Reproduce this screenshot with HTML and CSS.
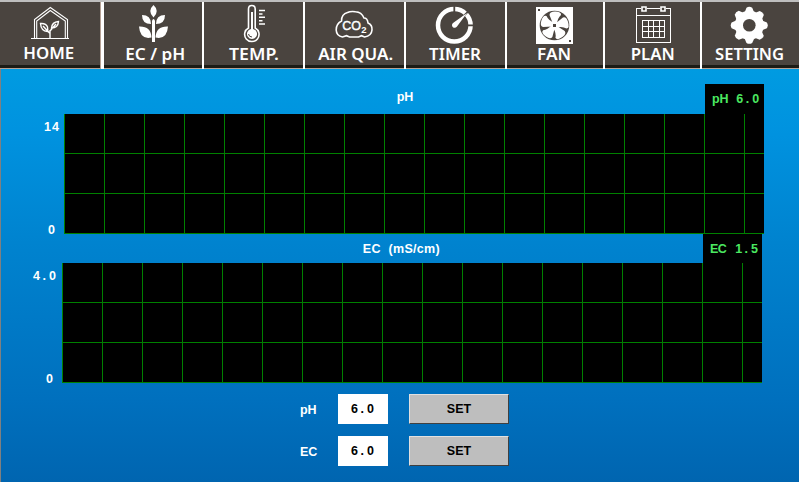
FILE: index.html
```
<!DOCTYPE html>
<html lang="en">
<head>
<meta charset="utf-8">
<title>EC / pH</title>
<link rel="stylesheet" href="styles.css">
</head>
<body>
<nav class="nav">
  <a class="tile first"><svg viewBox="0 2 100 63">
    <g class="line">
      <path d="M34.5 38V19.5L50.3 7.5L67.5 19.5V38M36.7 38V21L50.3 10.5L65.3 21V38M31 38.5H69"/>
      <path class="leaf" d="M50 38V30M40.5 23.5Q46 23 47.5 27Q48 30 47.5 31.5Q41 31 40.5 23.5ZM43 26L49.5 33M58.5 21.5Q52 22 51.5 28Q58 28 58.5 21.5ZM56 24L50 31"/>
    </g>
    <text x="48.7" y="59" textLength="51" lengthAdjust="spacingAndGlyphs">HOME</text></svg></a>
  <a class="tile"><svg viewBox="104 2 98 63">
    <g class="fill">
      <path d="M153.5 5Q160 11 153.5 17.5Q147 11 153.5 5Z"/>
      <path d="M142 15Q151 15 151 24Q142 24 142 15ZM165 15Q156 15 156 24Q165 24 165 15Z"/>
      <path d="M139 26.5Q151 26 151.5 37.5Q140 40 139 26.5ZM168 26.5Q156 26 155.5 37.5Q167 40 168 26.5Z"/>
      <path d="M152 20.5Q153.5 17.5 155 20.5V42H152Z"/>
    </g>
    <text x="155.3" y="60" textLength="60" lengthAdjust="spacingAndGlyphs">EC / pH</text></svg></a>
  <a class="tile"><svg viewBox="204 2 99 63">
    <path class="line mid" d="M248.5 28V9Q248.5 5.5 251.8 5.5Q255.2 5.5 255.2 9V28A7.2 7.2 0 1 1 248.5 28Z"/>
    <path class="fill" d="M251 12H253V29A5 5 0 1 1 251 29Z"/>
    <path class="dark" d="M248.5 34Q249 37 252 37"/>
    <path class="line mid" d="M259 10.5H265M259 14H262.5M259 17.3H265M259 20.7H262.5M259 24H265"/>
    <text x="254" y="60" textLength="50" lengthAdjust="spacingAndGlyphs">TEMP.</text></svg></a>
  <a class="tile"><svg viewBox="305 2 98 63">
    <path class="line mid" d="M342 37Q336 36 335.7 30Q335.5 24 341 21Q341 14 347 12.5Q350 11 355 11.7Q361 12 363.5 18Q367 18 367.5 23Q372 25 371.5 30Q371 36 364 37L361 35.7L358 37H349L346 35.7Z"/>
    <text class="co" x="351" y="30">CO</text><text class="sub" x="363.3" y="33">2</text>
    <text x="355.2" y="60" textLength="75" lengthAdjust="spacingAndGlyphs">AIR QUA.</text></svg></a>
  <a class="tile"><svg viewBox="406 2 99 63">
    <circle class="ring" cx="454.3" cy="25.3" r="16.3"/>
    <path class="gap" d="M454.3 6V13M467.7 25.3H474M464 15.6L470 9.6"/>
    <path class="fill" d="M467 13L457 26.5A2.7 2.7 0 1 1 453 23Z"/>
    <text x="455" y="60" textLength="52" lengthAdjust="spacingAndGlyphs">TIMER</text></svg></a>
  <a class="tile"><svg viewBox="507 2 96 63">
    <path class="fill" d="M536 7H573V44H536Z"/>
    <circle class="bg" cx="554.5" cy="25.5" r="14.8"/>
    <g class="fill">
      <path id="blade" d="M553 24L549.5 15Q549.5 11.5 555 11.5Q561.5 11.5 561 15Q557.5 18 557 24Z"/>
      <use href="#blade" transform="rotate(72 554.5 25.5)"/>
      <use href="#blade" transform="rotate(144 554.5 25.5)"/>
      <use href="#blade" transform="rotate(216 554.5 25.5)"/>
      <use href="#blade" transform="rotate(288 554.5 25.5)"/>
      <circle cx="554.5" cy="25.5" r="3.5"/>
    </g>
    <path class="bg" d="M553 24H556V27H553ZM538 9H540V11H538ZM569 40H571V42H569Z"/>
    <text x="554" y="60" textLength="34" lengthAdjust="spacingAndGlyphs">FAN</text></svg></a>
  <a class="tile"><svg viewBox="605 2 95 63">
    <g class="line crisp">
      <path d="M641 8.5H636.5V42.5H670.5V8.5H666M647 8.5H660M636.5 15.5H671"/>
      <path d="M642.5 20.5H664.5V37.5H642.5ZM642.5 26.5H664.5M642.5 31.5H664.5M648.5 20V38M653.5 20V38M659.5 20V38"/>
    </g>
    <path class="line mid" d="M642 7H646V11H642ZM661 7H665V11H661Z"/>
    <text x="652.7" y="60" textLength="44" lengthAdjust="spacingAndGlyphs">PLAN</text></svg></a>
  <a class="tile last"><svg viewBox="702 2 97 63">
    <g class="fill">
      <path id="tooth" d="M744.8 12L746.5 7.7Q749.3 6 752.2 7.7L754 12V39L752.2 43Q749.3 44.7 746.5 43L744.8 39Z"/>
      <use href="#tooth" transform="rotate(45 749.3 25.3)"/>
      <use href="#tooth" transform="rotate(90 749.3 25.3)"/>
      <use href="#tooth" transform="rotate(135 749.3 25.3)"/>
      <circle cx="749.3" cy="25.3" r="14.5"/>
    </g>
    <circle class="bg" cx="749.3" cy="25.3" r="6.3"/>
    <text x="749.5" y="60" textLength="69" lengthAdjust="spacingAndGlyphs">SETTING</text></svg></a>
</nav>
<main class="panel">
  <section class="graph ph">
    <header class="head"><h2 class="name">pH</h2><output><span class="name">pH</span><span class="num">6<i>.</i>0</span></output></header>
    <div class="row"><div class="axis num"><span>14</span><span>0</span></div><div class="plot"></div></div>
  </section>
  <section class="graph ec">
    <header class="head"><h2>EC (mS/cm)</h2><output><span class="name">EC</span><span class="num">1<i>.</i>5</span></output></header>
    <div class="row"><div class="axis num"><span>4<i>.</i>0</span><span>0</span></div><div class="plot"></div></div>
  </section>
  <form class="settings">
    <label class="name">pH</label><span class="value num">6<i>.</i>0</span><button type="button">SET</button>
    <label class="name">EC</label><span class="value num">6<i>.</i>0</span><button type="button">SET</button>
  </form>
</main>
</body>
</html>
```
FILE: styles.css
```
* { box-sizing: border-box; }
body {
  margin: 0;
  width: 799px;
  height: 483px;
  overflow: hidden;
  background: #fff;
  font: bold 12.5px/16px "Liberation Sans", sans-serif;
  color: #fff;
}
i { font-style: normal; }
.num { letter-spacing: 1.05px; }
.num i { padding: 0 2px 0 1.4px; }
.name { letter-spacing: -0.6px; }
h2.name, .ph output .name, .settings .name { letter-spacing: -0.2px; }
.nav {
  display: grid;
  grid-template-columns: 104px 100px 101px 101px 101px 98px 97px 97px;
  height: 69px;
  border-top: 2px solid #bebebe;
}
.tile {
  background: linear-gradient(#4a443f 0 63px, #1c1b15 63px 66px, #b5a195 66px);
  border-right: 2px solid #fff;
}
.tile.first { border-right-width: 3px; padding-right: 1px; box-shadow: inset -1px 0 #b5a195; }
.tile.last { border-right: 0; }
.tile svg { display: block; width: 100%; height: 63px; }
.tile text {
  font: 600 16.5px "Noto Sans", sans-serif;
  fill: #fff;
  text-anchor: middle;
}
.tile .co { font: 12.5px "Liberation Sans", sans-serif; stroke: #fff; stroke-width: .4; }
.tile .sub { font: bold 9.5px "Liberation Sans", sans-serif; }
.line { fill: none; stroke: #fff; stroke-width: 1.1; }
.leaf { stroke-width: 1.4; }
.mid { stroke-width: 1.6; }
.crisp { shape-rendering: crispEdges; stroke-width: 1; }
.fill { fill: #fff; }
.bg { fill: #4a443f; }
.dark { fill: none; stroke: #4a443f; }
.ring { fill: none; stroke: #fff; stroke-width: 4.5; }
.gap { fill: none; stroke: #4a443f; stroke-width: 1.8; }

.panel {
  height: 413px;
  padding-top: 15px;
  border-left: 1px solid #808080;
  background: linear-gradient(#009be1, #0092df 16%, #0083cf 42%, #0070be 80%, #0065b0);
}
.head { display: flex; justify-content: flex-end; }
.head h2 { margin: 0; font: inherit; flex: none; white-space: pre; }
.head output {
  display: flex;
  flex: none;
  gap: 8px;
  width: 59px;
  background: #000;
  color: #4be861;
}
.row { display: flex; height: 120px; }
.axis {
  display: flex;
  flex-direction: column;
  justify-content: space-between;
  text-align: right;
}
.plot {
  width: 700px;
  background:
    repeating-linear-gradient(90deg, #008000 0 1px, transparent 1px 40px),
    repeating-linear-gradient(transparent 0 39px, #008000 39px 40px),
    #000;
}
.ph .head { height: 30px; width: 763px; }
.ph h2 { margin: 5px 292px 0 0; }
.ph output { padding: 7px 0 0 7px; }
.ph .axis { width: 63px; padding: 5px 4px 0 0; margin-bottom: -4px; }
.ph .axis span:last-child { padding-right: 4px; }
.ec .head { height: 29px; width: 761px; }
.ec h2 { margin: 7px 263px 0 0; letter-spacing: .3px; word-spacing: 4px; }
.ec output { gap: 9px; padding: 7px 0 0 7px; }
.ec .axis { width: 61px; padding: 5px 5px 0 0; margin-bottom: -4px; }
.ec .axis span:last-child { padding-right: 3px; }
.settings {
  display: grid;
  grid-template-columns: 38px 50px 100px;
  grid-auto-rows: 30px;
  row-gap: 12px;
  margin: 11px 0 0 299px;
}
.settings label { padding-top: 8px; }
.value {
  background: #fff;
  color: #000;
  text-align: center;
  line-height: 30px;
}
.settings button {
  width: 100px;
  margin-left: 21px;
  padding: 0;
  font: inherit;
  color: #000;
  background: #bebebe;
  border: 1px solid #e0e0e0;
  border-right-color: #404040;
  border-bottom-color: #404040;
}
```
